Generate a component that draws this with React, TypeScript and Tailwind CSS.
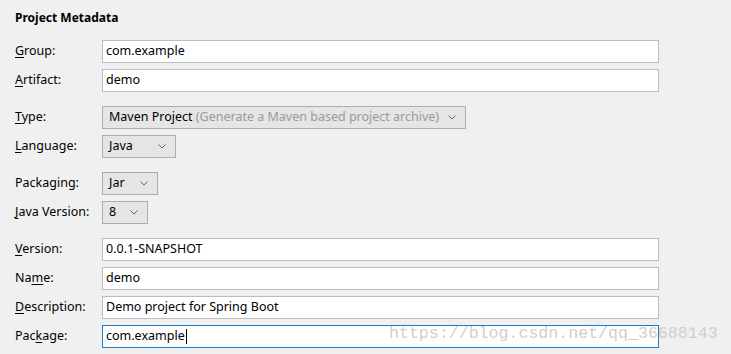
import { ReactNode } from "react";

function Label({ text, u }: { text: string; u?: number }) {
  // u = index of the mnemonic letter to underline
  if (u === undefined) return <span>{text}</span>;
  return (
    <span>
      {text.slice(0, u)}
      <span className="underline underline-offset-2">{text[u]}</span>
      {text.slice(u + 1)}
    </span>
  );
}

function Row({ label, children }: { label: ReactNode; children: ReactNode }) {
  return (
    <div className="flex h-[23px] items-center">
      <div className="w-[87px] shrink-0">{label}</div>
      {children}
    </div>
  );
}

function TextBox({ value, focused }: { value: string; focused?: boolean }) {
  return (
    <div
      className={`flex h-[23px] w-[557px] items-center border bg-white pl-[3px] ${
        focused ? "border-[#1979ca]" : "border-[#bdbdbd]"
      }`}
    >
      {value}
      {focused ? <span className="ml-px inline-block h-[15px] w-px bg-black" /> : null}
    </div>
  );
}

function Chevron() {
  return (
    <svg width="8" height="5" viewBox="0 0 8 5" className="shrink-0">
      <path d="M0.5 0.5 L4 4 L7.5 0.5" fill="none" stroke="#666" strokeWidth="1" />
    </svg>
  );
}

function Select({ width, children }: { width: string; children: ReactNode }) {
  return (
    <div className={`flex h-[23px] items-center justify-between border border-[#adadad] bg-[#e5e5e5] pl-[6px] pr-[9px] ${width}`}>
      <span>{children}</span>
      <Chevron />
    </div>
  );
}

export default function App() {
  return (
    <div
      className="relative h-[354px] w-[731px] overflow-hidden bg-[#f0f0f0] text-[12.5px] text-black"
      style={{ fontFamily: '"Noto Sans", "Liberation Sans", sans-serif' }}
    >
      <div className="flex flex-col pl-[15px] pt-[8px]">
        <h1 className="h-[20px] text-[12px] font-bold leading-[20px]">Project Metadata</h1>

        <div className="mt-[12px] flex flex-col gap-[6px]">
          <Row label={<Label text="Group:" u={0} />}>
            <TextBox value="com.example" />
          </Row>
          <Row label={<Label text="Artifact:" u={0} />}>
            <TextBox value="demo" />
          </Row>
        </div>

        <div className="mt-[14px] flex flex-col gap-[6px]">
          <Row label={<Label text="Type:" u={0} />}>
            <Select width="w-[364px]">
              Maven Project <span className="text-[#9a9a9a]">(Generate a Maven based project archive)</span>
            </Select>
          </Row>
          <Row label={<Label text="Language:" u={0} />}>
            <Select width="w-[74px]">Java</Select>
          </Row>
        </div>

        <div className="mt-[14px] flex flex-col gap-[6px]">
          <Row label={<Label text="Packaging:" />}>
            <Select width="w-[56px]">Jar</Select>
          </Row>
          <Row label={<Label text="Java Version:" u={0} />}>
            <Select width="w-[46px]">8</Select>
          </Row>
        </div>

        <div className="mt-[14px] flex flex-col gap-[6px]">
          <Row label={<Label text="Version:" u={0} />}>
            <TextBox value="0.0.1-SNAPSHOT" />
          </Row>
          <Row label={<Label text="Name:" u={2} />}>
            <TextBox value="demo" />
          </Row>
          <Row label={<Label text="Description:" u={0} />}>
            <TextBox value="Demo project for Spring Boot" />
          </Row>
          <Row label={<Label text="Package:" u={3} />}>
            <TextBox value="com.example" focused />
          </Row>
        </div>
      </div>

      <div
        className="absolute left-[389px] top-[324px] text-[16.6px] leading-[20px] text-[#cfcfcf]"
        style={{ fontFamily: '"Liberation Mono", "DejaVu Sans Mono", monospace' }}
      >
        https://blog.csdn.net/qq_36688143
      </div>
    </div>
  );
}
